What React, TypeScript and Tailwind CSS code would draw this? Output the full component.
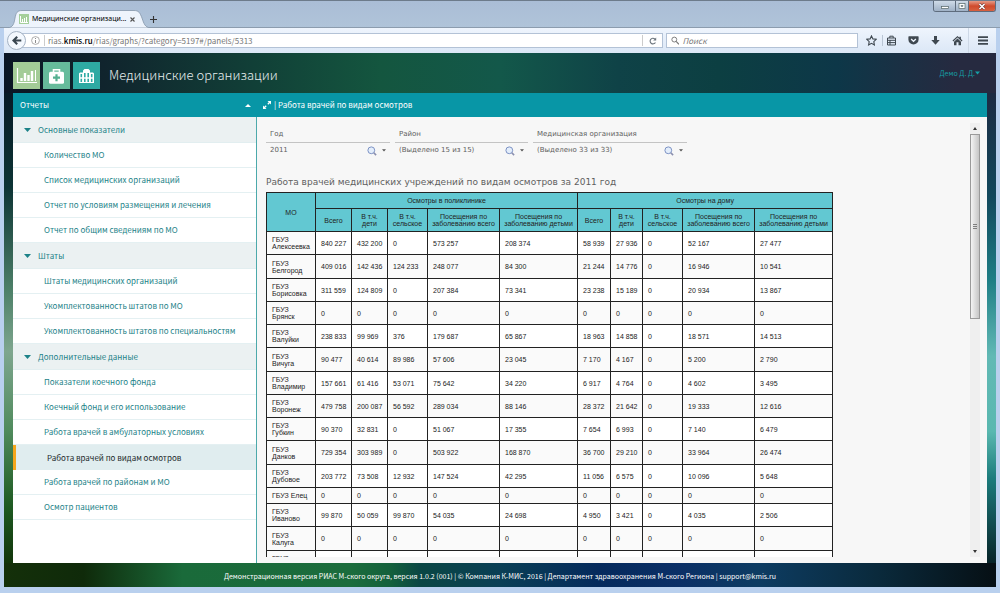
import { Fragment, useState } from "react";
import type { ReactNode } from "react";

type Row = [string, ...string[]];

const menu = [
  {
    title: "Основные показатели",
    items: [
      "Количество МО",
      "Список медицинских организаций",
      "Отчет по условиям размещения и лечения",
      "Отчет по общим сведениям по МО",
    ],
  },
  {
    title: "Штаты",
    items: [
      "Штаты медицинских организаций",
      "Укомплектованность штатов по МО",
      "Укомплектованность штатов по специальностям",
    ],
  },
  {
    title: "Дополнительные данные",
    items: [
      "Показатели коечного фонда",
      "Коечный фонд и его использование",
      "Работа врачей в амбулаторных условиях",
      "Работа врачей по видам осмотров",
      "Работа врачей по районам и МО",
      "Осмотр пациентов",
    ],
  },
];

const subHeaders = [
  "Всего",
  "В т.ч. дети",
  "В т.ч. сельское",
  "Посещения по заболеванию всего",
  "Посещения по заболеванию детьми",
];

const rows: Row[] = [
  ["ГБУЗ\nАлексеевка", "840 227", "432 200", "0", "573 257", "208 374", "58 939", "27 936", "0", "52 167", "27 477"],
  ["ГБУЗ\nБелгород", "409 016", "142 436", "124 233", "248 077", "84 300", "21 244", "14 776", "0", "16 946", "10 541"],
  ["ГБУЗ\nБорисовка", "311 559", "124 809", "0", "207 384", "73 341", "23 238", "15 189", "0", "20 934", "13 867"],
  ["ГБУЗ\nБрянск", "0", "0", "0", "0", "0", "0", "0", "0", "0", "0"],
  ["ГБУЗ\nВалуйки", "238 833", "99 969", "376", "179 687", "65 867", "18 963", "14 858", "0", "18 571", "14 513"],
  ["ГБУЗ\nВичуга", "90 477", "40 614", "89 986", "57 606", "23 045", "7 170", "4 167", "0", "5 200", "2 790"],
  ["ГБУЗ\nВладимир", "157 661", "61 416", "53 071", "75 642", "34 220", "6 917", "4 764", "0", "4 602", "3 495"],
  ["ГБУЗ\nВоронеж", "479 758", "200 087", "56 592", "289 034", "88 146", "28 372", "21 642", "0", "19 333", "12 616"],
  ["ГБУЗ\nГубкин", "90 370", "32 831", "0", "51 067", "17 355", "7 654", "6 993", "0", "7 140", "6 479"],
  ["ГБУЗ\nДанков", "729 354", "303 989", "0", "503 922", "168 870", "36 700", "29 210", "0", "33 964", "26 474"],
  ["ГБУЗ\nДубовое", "203 772", "73 508", "12 932", "147 524", "42 295", "11 056", "6 575", "0", "10 096", "5 648"],
  ["ГБУЗ Елец", "0", "0", "0", "0", "0", "0", "0", "0", "0", "0"],
  ["ГБУЗ\nИваново", "99 870", "50 059", "99 870", "54 035", "24 698", "4 950", "3 421", "0", "4 035", "2 506"],
  ["ГБУЗ\nКалуга", "0", "0", "0", "0", "0", "0", "0", "0", "0", "0"],
  ["ГБУЗ\n\u00a0", "", "", "", "", "", "", "", "", "", ""],
];

function TitleBar() {
  return (
    <div className="flex h-7 items-stretch justify-between border-t border-[#6d7b8b] bg-linear-to-b from-[#aabdd6] to-[#b0c4d9] shadow-[inset_0_-1px_0_#8c9cae]">
      <div className="flex items-end pl-2">
        <div className="relative flex h-[18px] w-[142px] items-center pr-3 pl-[11px]">
          <svg className="absolute inset-0 h-full w-full" viewBox="0 0 142 18" preserveAspectRatio="none">
            <path
              d="M0 18C5 17 6 14 7 8C8 3 9 .5 14 .5H126C131 .5 132 3 134 8C136 14 137 17 142 18Z"
              fill="#eef4fc"
              stroke="#8496aa"
              strokeWidth=".8"
            />
          </svg>
          <svg className="relative h-[10px] w-[10px] shrink-0" viewBox="0 0 10 10">
            <rect width="10" height="10" fill="#a5cf9b" />
            <path d="M1.5 2v6.5H9M3.5 8V5M5.5 8V4M7.5 8V3" stroke="#fff" fill="none" />
          </svg>
          <span className="relative ml-[3px] flex-1 whitespace-nowrap font-['Noto_Sans',sans-serif] text-[7px] text-black">
            Медицинские организаци...
          </span>
          <button className="relative flex h-3 w-3 items-center justify-center" aria-label="Закрыть вкладку">
            <svg className="h-[5px] w-[5px]" viewBox="0 0 5 5">
              <path d="M.5.5l4 4M4.5.5l-4 4" stroke="#555" strokeWidth="1.1" />
            </svg>
          </button>
        </div>
        <button className="flex h-[18px] w-[7px] items-center justify-center" aria-label="Новая вкладка">
          <svg className="h-[7px] w-[7px]" viewBox="0 0 7 7">
            <path d="M3.5 0v7M0 3.5h7" stroke="#333" strokeWidth="1.1" />
          </svg>
        </button>
      </div>
      <div className="mr-1 flex h-[11px] w-[63px] overflow-hidden rounded-b-[3px] border border-t-0 border-[#5e6c7d]">
        <button className="flex w-[21px] items-center justify-center bg-linear-to-b from-[#cfdbe8] to-[#9fb1c6]" aria-label="Свернуть">
          <svg className="h-2 w-3" viewBox="0 0 12 8">
            <rect x="2.5" y="4.5" width="7" height="2" fill="#fff" stroke="#566" strokeWidth=".7" />
          </svg>
        </button>
        <button className="flex w-[14px] items-center justify-center border-x border-[#5e6c7d] bg-linear-to-b from-[#cfdbe8] to-[#9fb1c6]" aria-label="Развернуть">
          <svg className="h-2 w-2" viewBox="0 0 8 8">
            <rect x="1" y="1.5" width="6" height="5" fill="#fff" stroke="#566" strokeWidth=".7" />
            <rect x="3" y="3.3" width="2" height="1.4" fill="#8898aa" stroke="#566" strokeWidth=".4" />
          </svg>
        </button>
        <button className="flex flex-1 items-center justify-center bg-linear-to-b from-[#e59a86] via-[#cf4a2c] to-[#d8603f]" aria-label="Закрыть">
          <svg className="h-[7px] w-[8px]" viewBox="0 0 8 7">
            <path d="M1.5 1l5 5M6.5 1l-5 5" stroke="#633" strokeWidth="2.6" />
            <path d="M1.5 1l5 5M6.5 1l-5 5" stroke="#fff" strokeWidth="1.6" />
          </svg>
        </button>
      </div>
    </div>
  );
}

function ToolButton({ label, children }: { label: string; children: ReactNode }) {
  return (
    <button className="flex h-[22px] w-[22px] items-center justify-center text-[#3f4850]" aria-label={label}>
      <svg className="h-[11px] w-[11px]" viewBox="0 0 11 11" fill="none" stroke="currentColor">
        {children}
      </svg>
    </button>
  );
}

function Toolbar() {
  return (
    <div className="flex h-[25px] items-center bg-linear-to-b from-[#eff5fd] to-[#dbe7f6] pl-[3px] font-['Noto_Sans_CJK_SC',sans-serif] text-[8px]">
      <button
        className="relative z-10 -mr-[8px] flex h-[19px] w-[19px] shrink-0 items-center justify-center rounded-full border border-[#a4b2c3] bg-[#f3f8fe]"
        aria-label="Назад"
      >
        <svg className="h-[9px] w-[10px]" viewBox="0 0 10 9">
          <path d="M5.2.8L1.5 4.5l3.7 3.7M2 4.5h7.3" stroke="#3a4650" strokeWidth="2.1" fill="none" />
        </svg>
      </button>
      <div className="flex h-[15px] min-w-0 flex-1 items-center border border-[#b3c2d6] bg-white pl-3">
        <svg className="h-[9px] w-[9px] shrink-0" viewBox="0 0 9 9" fill="none" stroke="#8d8d8d">
          <circle cx="4.5" cy="4.5" r="3.9" strokeWidth=".7" />
          <path d="M4.5 4v3M4.5 2v1" />
        </svg>
        <span className="mr-[3px] ml-[4px] h-[11px] w-px bg-[#ccc]" />
        <div
          className="min-w-0 flex-1 whitespace-nowrap leading-[12px] text-[#777]"
          role="textbox"
          aria-label="Адрес"
          contentEditable
          suppressContentEditableWarning
        >
          rias.<b className="font-medium text-black">kmis.ru</b>/rias/graphs/?category=5197#/panels/5313
        </div>
        <button className="flex h-[11px] w-[20px] items-center justify-center border-l border-[#ccc]" aria-label="Обновить">
          <svg className="h-2 w-2" viewBox="0 0 8 8" fill="none" stroke="#6b747c">
            <path d="M6.4 5.4A2.8 2.8 0 1 1 5.8 2" strokeWidth="1.1" />
            <path d="M7.2.6v3H4.2z" fill="#6b747c" stroke="none" />
          </svg>
        </button>
      </div>
      <label className="ml-[3px] flex h-[15px] w-[192px] items-center border border-[#b3c2d6] bg-white pl-1">
        <svg className="h-[9px] w-[9px]" viewBox="0 0 9 9" fill="none" stroke="#777">
          <circle cx="3.5" cy="3.5" r="2.6" />
          <path d="M5.4 5.4L8.5 8.5" strokeWidth="1.3" />
        </svg>
        <input
          className="ml-[3px] w-full leading-[12px] italic outline-none placeholder:text-[#777]"
          placeholder="Поиск"
          aria-label="Поиск"
        />
      </label>
      <div className="ml-[2px] flex items-center">
        <ToolButton label="Добавить в закладки">
          <path d="M5.5.9l1.4 3 3.3.4-2.4 2.3.6 3.3-2.9-1.6-2.9 1.6.6-3.3L.8 4.3l3.3-.4z" strokeWidth="1.1" />
        </ToolButton>
        <span className="-mr-[3px] h-[11px] w-px bg-[#b9c5d4]" />
        <ToolButton label="Закладки">
          <path d="M1.5 3h8v7h-8zM3.8 3V1.2h3.4V3M1.5 5.3h8M1.5 7.6h8M4 5v5" />
        </ToolButton>
        <ToolButton label="Pocket">
          <path d="M1 1.2h9a.6.6 0 0 1 .6.6v2.7a5.1 5.1 0 0 1-10.2 0V1.8A.6.6 0 0 1 1 1.2z" fill="currentColor" stroke="none" />
          <path d="M3.1 4l2.4 2.3L7.9 4" stroke="#eef4fc" strokeWidth="1.3" />
        </ToolButton>
        <ToolButton label="Загрузки">
          <path d="M4 1h3v4h2.7L5.5 9.7 1.3 5H4z" fill="currentColor" stroke="none" />
        </ToolButton>
        <ToolButton label="Домой">
          <path d="M5.5 1L.5 5.6l.8.8 4.2-3.8 4.2 3.8.8-.8-1.6-1.5V1.8H7.4v.9z" fill="currentColor" stroke="none" />
          <path d="M5.5 3.6L2 6.8v3.4h2.5V7.3h2v2.9H9V6.8z" fill="currentColor" stroke="none" />
        </ToolButton>
        <span className="h-[25px] w-px bg-[#cdd8e6]" />
        <button className="flex h-[22px] w-[27px] items-center justify-center" aria-label="Меню">
          <svg className="h-[9px] w-[10px]" viewBox="0 0 10 9">
            <path d="M0 1.2h10M0 4.5h10M0 7.8h10" stroke="#3f4850" strokeWidth="1.8" />
          </svg>
        </button>
      </div>
    </div>
  );
}

function PageHeader() {
  return (
    <header className="flex h-10 items-center bg-[linear-gradient(90deg,#0a1524_0%,#10242d_10%,#113f37_25%,#14563f_38%,#13584a_50%,#0f4247_62%,#0c3f42_72%,#0d3748_84%,#262a40_96%,#262a40_100%)] px-[9px]">
      <nav className="flex gap-[3px] pt-1">
        <a href="#charts" className="block h-[27px] w-[27px] bg-[#a3cc97]" aria-label="Графики">
          <svg viewBox="0 0 27 27" fill="none" stroke="#fff">
            <path d="M4.5 6v14.5H24" strokeWidth="1.2" />
            <path d="M8.5 19v-3M12 19v-8M15.5 19v-6M19 19v-10" strokeWidth="2.4" />
            <path d="M22.5 19V8" strokeWidth="1" />
          </svg>
        </a>
        <a href="#medicine" className="block h-[27px] w-[27px] bg-[#66bb9b]" aria-label="Медицина">
          <svg viewBox="0 0 27 27">
            <path d="M10.5 10V7.7h6V10" stroke="#fff" strokeWidth="1.6" fill="none" />
            <rect x="6" y="9.7" width="15" height="12" rx="1.5" fill="#fff" />
            <path d="M13.5 12.2v7M10 15.7h7" stroke="#55b091" strokeWidth="2.2" />
          </svg>
        </a>
        <a href="#organizations" className="block h-[27px] w-[27px] bg-[#2eaaa3]" aria-label="Организации">
          <svg viewBox="0 0 27 27">
            <path d="M6 11.5l1-1h3V8.5L11.5 7h4L17 8.5v2h3l1 1V21H6z" fill="#fff" />
            <path
              d="M7.5 12h1.6v3.2H7.5zM7.5 16.8h1.6V20H7.5zM17.9 12h1.6v3.2h-1.6zM17.9 16.8h1.6V20h-1.6zM11 11h1.6v4.2H11zM14.4 11H16v4.2h-1.6zM11 16.8h1.6V20H11zM14.4 16.8H16V20h-1.6z"
              fill="#2eaaa3"
            />
          </svg>
        </a>
      </nav>
      <h1 className="ml-[9px] flex-1 pt-[3px] font-['Noto_Sans_CJK_SC',sans-serif] text-[13px] leading-5 font-light text-[#e6eeee]">
        Медицинские организации
      </h1>
      <button className="mr-[7px] flex items-center font-['Noto_Sans_CJK_SC',sans-serif] text-[7px] leading-3 text-[#169fa6]">
        Демо Д. Д.
        <svg className="h-[4px] w-[5px]" viewBox="0 0 5 4">
          <path d="M0 .5h5L2.5 3.5z" fill="currentColor" />
        </svg>
      </button>
    </header>
  );
}

function Sidebar() {
  const [active, setActive] = useState("Работа врачей по видам осмотров");

  return (
    <aside className="flex w-[244px] shrink-0 flex-col border-r border-[#4ca9ab] bg-white font-['Noto_Sans_CJK_SC',sans-serif] text-[8px] whitespace-nowrap text-[#1c8288]">
      <button className="-mr-px flex h-6 items-center justify-between bg-[#0896a6] pr-[6px] pl-[7px] text-white">
        Отчеты
        <svg className="h-[3px] w-[6px]" viewBox="0 0 6 3">
          <path d="M3 0l3 3H0z" fill="currentColor" />
        </svg>
      </button>
      <nav>
        {menu.map((group) => (
          <section key={group.title}>
            <button className="flex h-[26px] w-full items-center gap-[7px] border-b border-[#e2eef0] bg-[#ebf1f2] pl-[11px]">
              <svg className="h-[4px] w-[7px]" viewBox="0 0 7 4">
                <path d="M0 0h7L3.5 4z" fill="currentColor" />
              </svg>
              {group.title}
            </button>
            {group.items.map((item) => (
              <a
                key={item}
                href="#report"
                onClick={() => setActive(item)}
                className={
                  item === active
                    ? "flex h-[25px] items-center border-l-[3px] border-[#f5a61c] bg-[#e0edef] pl-[31px] text-[#1d2a2c]"
                    : "flex h-[25px] items-center border-b border-[#e4f0f2] pl-[31px]"
                }
              >
                {item}
              </a>
            ))}
          </section>
        ))}
      </nav>
    </aside>
  );
}

function Filter({ id, label, value, className }: { id: string; label: string; value: string; className: string }) {
  return (
    <div className={className}>
      <label htmlFor={id} className="block border-b border-[#c4c4c4] pb-[3px] pl-[4px] leading-[10px]">
        {label}
      </label>
      <div className="flex items-center pt-[2px] pr-1 pl-1">
        <input id={id} defaultValue={value} className="min-w-0 flex-1 leading-[11px] outline-none" />
        <button aria-label={`Найти: ${label}`}>
          <svg className="h-[10px] w-[10px]" viewBox="0 0 10 10">
            <circle cx="4.3" cy="4.3" r="3.4" fill="#e4eefb" stroke="#7d92c4" />
            <path d="M6.8 6.8l2.3 2.3" stroke="#8a8fae" strokeWidth="1.6" />
          </svg>
        </button>
        <button className="ml-[5px]" aria-label={`Выбрать: ${label}`}>
          <svg className="h-[3px] w-[4px]" viewBox="0 0 4 3">
            <path d="M0 .3h4L2 2.6z" fill="#555" />
          </svg>
        </button>
      </div>
    </div>
  );
}

function ReportTable() {
  return (
    <table className="w-[567px] table-fixed border-collapse bg-white font-['Liberation_Sans',Arial,sans-serif] text-[7px] leading-[7px] text-[#222]">
      <colgroup>
        <col className="w-[49px]" />
        <col className="w-[36px]" />
        <col className="w-[36px]" />
        <col className="w-[40px]" />
        <col className="w-[72px]" />
        <col className="w-[78px]" />
        <col className="w-[33px]" />
        <col className="w-[32px]" />
        <col className="w-[40px]" />
        <col className="w-[72px]" />
        <col className="w-[78px]" />
      </colgroup>
      <thead className="bg-[#62c8d2]">
        <tr className="h-4">
          <th rowSpan={2} className="border border-[#222] font-normal">МО</th>
          <th colSpan={5} className="border border-[#222] font-normal">Осмотры в поликлинике</th>
          <th colSpan={5} className="border border-[#222] font-normal">Осмотры на дому</th>
        </tr>
        <tr className="h-[23px]">
          {["clinic", "home"].map((place) => (
            <Fragment key={place}>
              {subHeaders.map((title) => (
                <th key={title} className="border border-[#222] px-[4px] font-normal">
                  {title}
                </th>
              ))}
            </Fragment>
          ))}
        </tr>
      </thead>
      <tbody>
        {rows.map(([name, ...values]) => (
          <tr key={name} className={name === "ГБУЗ Елец" ? "h-4 bg-[#fafafa]" : "h-[23px] even:bg-[#fafafa] nth-[4n+2]:h-6"}>
            <th className="border border-[#222] bg-[#fafafa] py-0 pr-0 pl-[5px] text-left font-normal whitespace-pre-line">
              {name}
            </th>
            {values.map((value, i) => (
              <td key={i} className="border border-[#222] py-0 pr-0 pl-[5px]">
                {value}
              </td>
            ))}
          </tr>
        ))}
      </tbody>
    </table>
  );
}

function Scrollbar() {
  return (
    <div className="mr-[7px] mb-[6px] flex w-[10px] shrink-0 flex-col items-center bg-[#efefef]">
      <button className="flex h-[11px] w-full items-center justify-center" aria-label="Вверх">
        <svg className="h-[3px] w-[4px]" viewBox="0 0 4 3">
          <path d="M2 0l2 3H0z" fill="#333" />
        </svg>
      </button>
      <div className="flex w-full basis-[185px] items-center justify-center border border-[#9a9a9a] bg-linear-to-r from-[#f4f4f4] to-[#c6c6c6]">
        <svg className="h-[5px] w-[4px]" viewBox="0 0 4 5">
          <path d="M0 .5h4M0 2.5h4M0 4.5h4" stroke="#666" strokeWidth=".8" />
        </svg>
      </div>
      <button className="mt-auto flex h-[11px] w-full items-center justify-center" aria-label="Вниз">
        <svg className="h-[3px] w-[4px]" viewBox="0 0 4 3">
          <path d="M0 0h4L2 3z" fill="#333" />
        </svg>
      </button>
    </div>
  );
}

function Report() {
  return (
    <main className="flex min-w-0 flex-1 flex-col bg-[#f7f7f7]">
      <h2 className="flex h-6 shrink-0 items-center gap-[3px] bg-[#0896a6] pl-[6px] font-['Noto_Sans_CJK_SC',sans-serif] text-[8px] text-white">
        <svg className="h-[8px] w-[8px]" viewBox="0 0 8 8">
          <path d="M4.5 0H8v3.5zM0 4.5V8h3.5z" fill="#fff" />
          <path d="M7 1L4.8 3.2M1 7l2.2-2.2" stroke="#fff" strokeWidth="1.3" />
        </svg>
        | Работа врачей по видам осмотров
      </h2>
      <div className="flex min-h-0 flex-1 pt-[6px]">
        <div className="mb-[6px] min-w-0 flex-1 overflow-hidden pl-[9px] font-['DejaVu_Sans',Verdana,sans-serif] text-[#606060]">
          <div className="flex gap-[5px] pt-[6px] text-[7px]">
            <Filter id="year" label="Год" value="2011" className="w-[124px]" />
            <Filter id="district" label="Район" value="(Выделено 15 из 15)" className="w-[133px]" />
            <Filter id="org" label="Медицинская организация" value="(Выделено 33 из 33)" className="w-[154px]" />
          </div>
          <h3 className="mt-[20px] mb-[3px] text-[9px] leading-[13px]">
            Работа врачей медицинских учреждений по видам осмотров за 2011 год
          </h3>
          <ReportTable />
        </div>
        <Scrollbar />
      </div>
    </main>
  );
}

export default function App() {
  return (
    <div className="flex h-screen flex-col overflow-hidden bg-[#bdd3ee]">
      <TitleBar />
      <div className="flex min-h-0 flex-1 flex-col border-x-4 border-b-[6px] border-[#b9d0ee]">
        <Toolbar />
        <PageHeader />
        <div className="flex min-h-0 flex-1">
          <div className="w-[9px] shrink-0 bg-[linear-gradient(180deg,#071a26_0%,#0d3435_20%,#4d8068_42%,#7ea68e_55%,#4f8a5c_72%,#1e5a22_88%,#12350a_100%)]" />
          <Sidebar />
          <Report />
          <div className="w-[9px] shrink-0 bg-[linear-gradient(180deg,#1d2b43_0%,#12485c_22%,#1f7f86_40%,#62b9b5_56%,#5ab8b0_72%,#1c7c7c_82%,#082429_100%)]" />
        </div>
        <footer className="flex h-6 shrink-0 items-center justify-center bg-[linear-gradient(90deg,#14300a_0%,#0f2a0a_8%,#1a6a3a_18%,#1b6c3c_35%,#14603c_39%,#0a4644_42%,#0a3f55_50%,#052a5c_60%,#0b2f66_68%,#0d3c62_76%,#0a2a3c_88%,#060f14_100%)] font-['Noto_Sans_CJK_SC',sans-serif] text-[7px] text-white">
          <p className="pt-[2px]">
            Демонстрационная версия РИАС М-ского округа, версия 1.0.2 (001) | © Компания К-МИС, 2016 | Департамент
            здравоохранения М-ского Региона |{" "}
            <a href="mailto:support@kmis.ru">support@kmis.ru</a>
          </p>
        </footer>
      </div>
    </div>
  );
}
